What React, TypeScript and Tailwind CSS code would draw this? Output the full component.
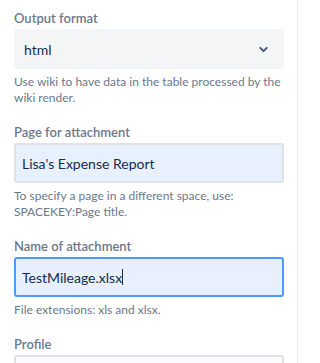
import { ChevronDown } from 'lucide-react';

const font = { fontFamily: '"Segoe UI", Lato, "Noto Sans", sans-serif' };

interface FieldProps {
  label: string;
  help: React.ReactNode;
  children: React.ReactNode;
}

const Field = ({ label, help, children }: FieldProps) => (
  <div className="flex flex-col">
    <label className="text-[13px] leading-4 font-semibold text-[#6b778c]">{label}</label>
    <div className="mt-[3px]">{children}</div>
    <p className="mt-[5px] text-[12px] leading-4 text-[#6b778c]">{help}</p>
  </div>
);

export default function App() {
  return (
    <div className="w-[302px] h-[363px] overflow-hidden bg-white" style={font}>
      <div className="w-[298px] h-full border-r border-[#ebecf0] pl-[14px] pt-[10px] flex flex-col gap-[18px]">
        <Field label="Output format" help="Use wiki to have data in the table processed by the wiki render.">
          <div className="w-[270px] h-10 rounded-[3px] bg-[#f4f5f7] flex items-center justify-between pl-[10px] pr-[14px]">
            <span className="text-[14px] text-[#172b4d]">html</span>
            <ChevronDown size={13} strokeWidth={3.5} className="text-[#42526e]" />
          </div>
        </Field>

        <Field label="Page for attachment" help={<>To specify a page in a different space, use:<br />SPACEKEY:Page title.</>}>
          <div className="w-[270px] h-10 rounded-[3px] border-2 border-[#dfe1e6] bg-[#e8f0fe] flex items-center px-[6px]">
            <span className="text-[14px] text-[#172b4d]">Lisa's Expense Report</span>
          </div>
        </Field>

        <Field label="Name of attachment" help="File extensions: xls and xlsx.">
          <div className="w-[270px] h-10 rounded-[3px] border-2 border-[#4c9aff] bg-[#e8f0fe] flex items-center px-[6px]">
            <span className="text-[14px] text-[#172b4d]">TestMileage.xlsx</span>
            <span className="w-px h-[16px] bg-[#172b4d]" />
          </div>
        </Field>

        <div className="flex flex-col">
          <label className="text-[13px] leading-4 font-semibold text-[#6b778c]">Profile</label>
          <div className="mt-[3px] w-[270px] h-10 rounded-[3px] border-2 border-[#dfe1e6] bg-[#fafbfc]" />
        </div>
      </div>
    </div>
  );
}
